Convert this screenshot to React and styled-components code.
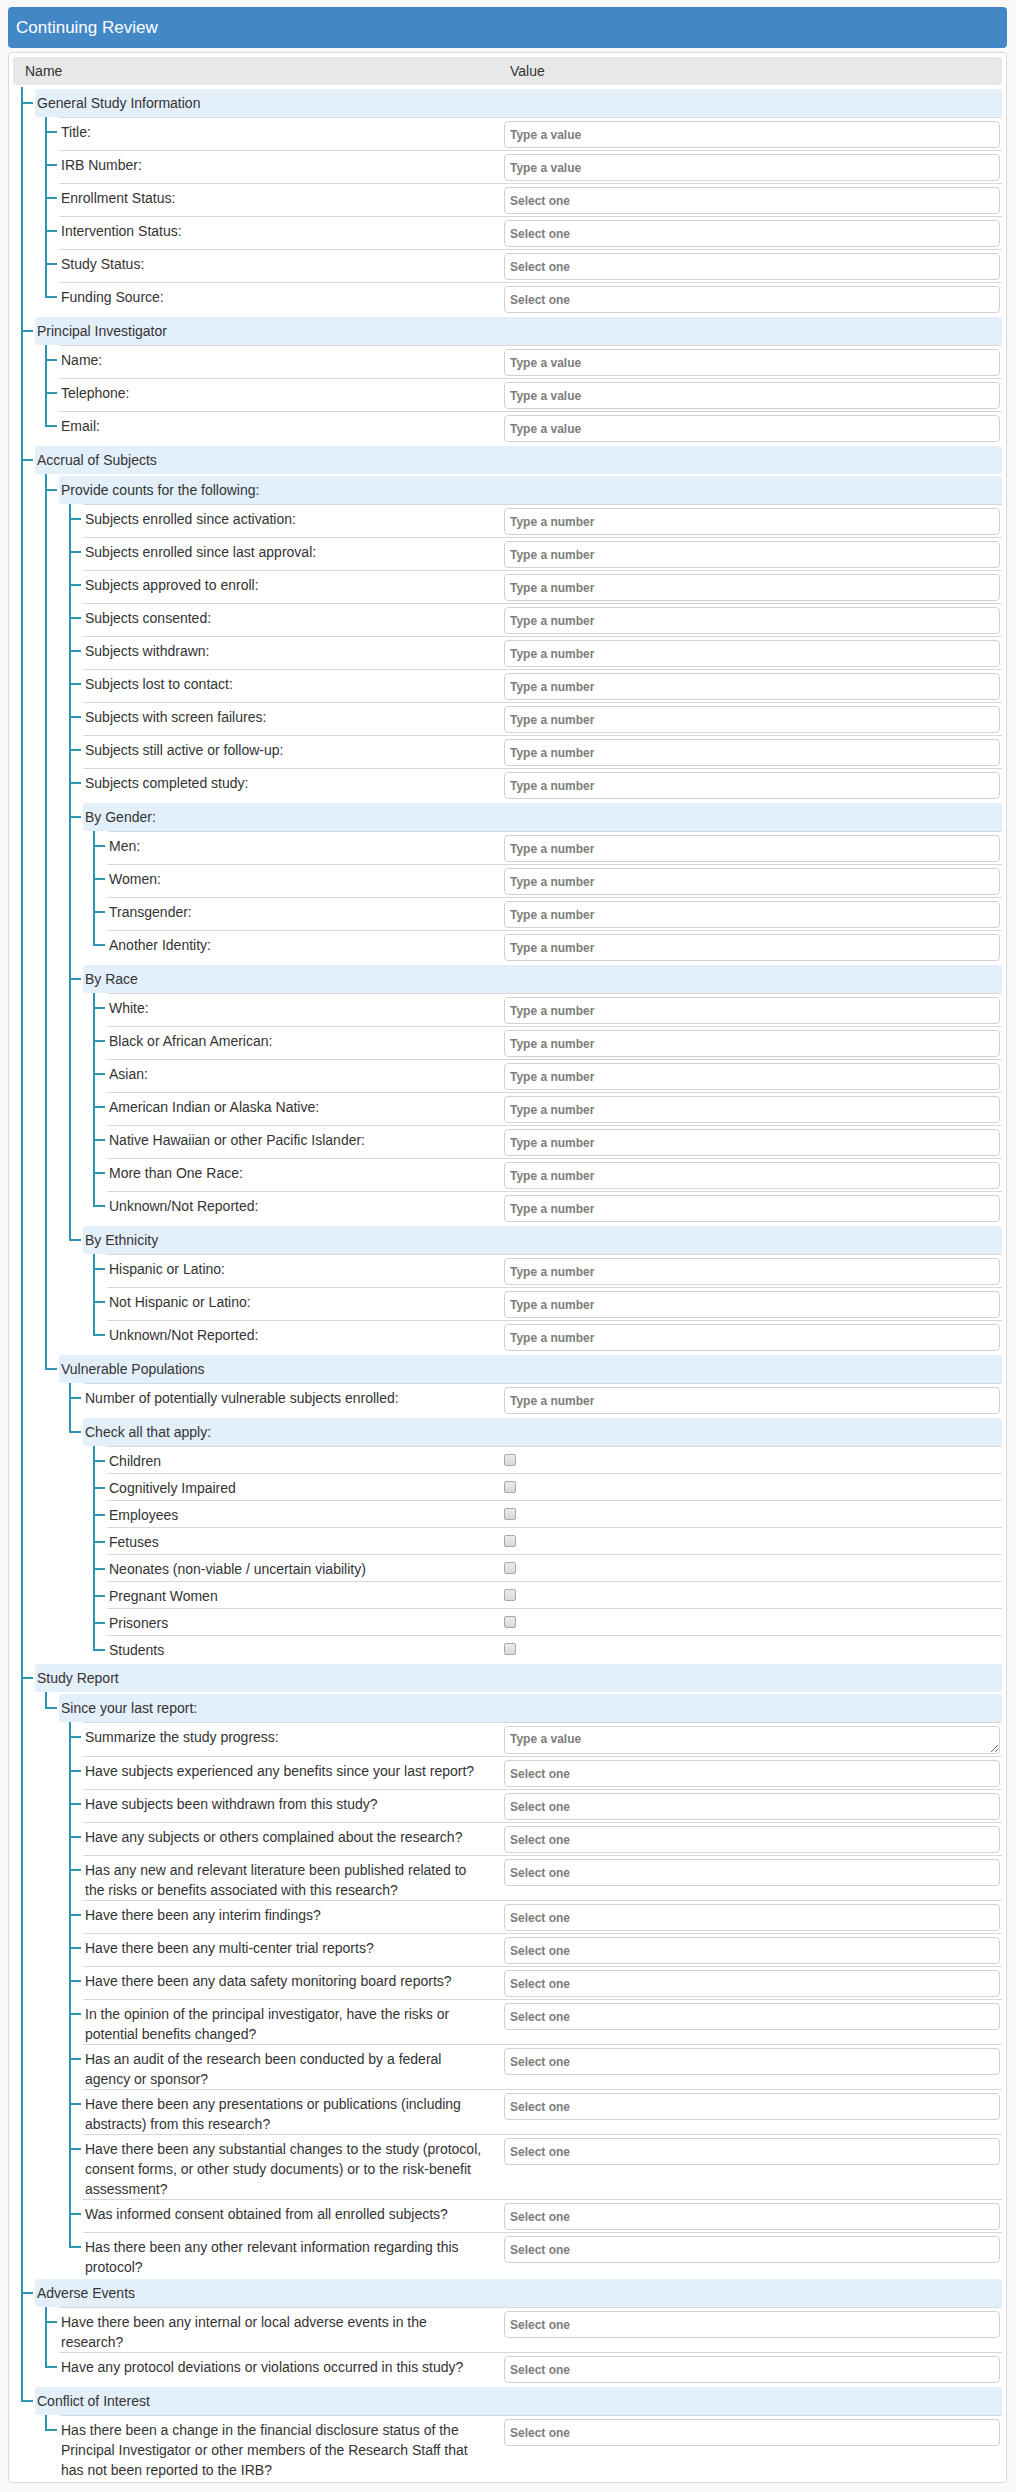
import React from "react"
import styled, { createGlobalStyle, css } from "styled-components"

const LINE = "#2b95b3"

const GlobalStyle = createGlobalStyle`
    html, body {
        margin: 0;
        padding: 0;
        background: #f8f8f8;
    }
    body {
        font-family: "Liberation Sans", Arial, sans-serif;
        font-size: 14px;
        color: #333;
    }
    * {
        box-sizing: border-box;
    }
`

const Page = styled.div`
    padding: 7px 9px 0 8px;
`

const Heading = styled.div`
    height: 41px;
    display: flex;
    align-items: center;
    padding: 0 8px;
    background: #4388c6;
    color: #fff;
    font-size: 17px;
    border-radius: 4px;
`

const Panel = styled.div`
    margin-top: 4px;
    background: #fff;
    border: 1px solid #dadada;
    border-radius: 4px;
    padding: 4px 4px 2px;
`

const HeadRow = styled.div`
    display: flex;
    align-items: center;
    height: 28px;
    margin-bottom: 2px;
    background: #e8e8e8;
    border-radius: 3px;
`

const HeadName = styled.div`
    flex: 1;
    padding-left: 12px;
`

const HeadValue = styled.div`
    width: 498px;
    flex: none;
    padding-left: 6px;
`

const TreeList = styled.ul`
    list-style: none;
    margin: 0;
    padding: 0 0 0 ${p => (p.$root ? 22 : 24)}px;
`

// vertical guide + horizontal stub for every node
const Node = styled.li`
    position: relative;
    padding-top: ${p => (p.$group ? 2 : 0)}px;

    &::before {
        content: "";
        position: absolute;
        left: -14px;
        top: 0;
        width: 2px;
        background: ${LINE};
        ${p =>
            p.$last
                ? css`height: ${p.$group ? 17 : 16}px;`
                : css`bottom: 0;`}
    }
    &::after {
        content: "";
        position: absolute;
        left: -14px;
        top: ${p => (p.$group ? 15 : 14)}px;
        width: 12px;
        height: 2px;
        background: ${LINE};
    }
`

const GroupRow = styled.div`
    height: 28px;
    line-height: 28px;
    padding-left: 2px;
    background: #e3effb;
    border-radius: 3px;
`

const ItemRow = styled.div`
    display: flex;
    align-items: flex-start;
    border-top: 1px solid #d5d9de;
`

const Label = styled.div`
    flex: 1;
    min-width: 0;
    padding: 4px 18px 0 2px;
    line-height: 20px;
`

const ValueCell = styled.div`
    width: 498px;
    flex: none;
    padding: ${p => (p.$check ? "7px 0 7px" : "3px 2px 2px 0")};
`

const fieldStyle = css`
    display: block;
    width: 100%;
    border: 1px solid #cfd2d5;
    border-radius: 4px;
    background: #fff;
    padding: 0 5px;
    font-family: "Liberation Sans", Arial, sans-serif;
    font-size: 12px;
    font-weight: bold;
    color: #555;
    outline: none;
    &::placeholder {
        color: #7d7d7d;
        opacity: 1;
    }
`

const Field = styled.input`
    ${fieldStyle};
    height: 27px;
`

const Area = styled.textarea`
    ${fieldStyle};
    height: 28px;
    padding-top: 5px;
    resize: vertical;
`

const Check = styled.span`
    display: block;
    width: 12px;
    height: 12px;
    border: 1px solid #a8a8a8;
    border-radius: 2px;
    background: linear-gradient(#ececec, #d9d9d9);
`

const t = label => ({ label, kind: "text" })
const s = label => ({ label, kind: "select" })
const n = label => ({ label, kind: "number" })
const c = label => ({ label, kind: "check" })

const tree = [
    {
        label: "General Study Information",
        children: [t("Title:"), t("IRB Number:"), s("Enrollment Status:"), s("Intervention Status:"), s("Study Status:"), s("Funding Source:")],
    },
    {
        label: "Principal Investigator",
        children: [t("Name:"), t("Telephone:"), t("Email:")],
    },
    {
        label: "Accrual of Subjects",
        children: [
            {
                label: "Provide counts for the following:",
                children: [
                    n("Subjects enrolled since activation:"),
                    n("Subjects enrolled since last approval:"),
                    n("Subjects approved to enroll:"),
                    n("Subjects consented:"),
                    n("Subjects withdrawn:"),
                    n("Subjects lost to contact:"),
                    n("Subjects with screen failures:"),
                    n("Subjects still active or follow-up:"),
                    n("Subjects completed study:"),
                    {
                        label: "By Gender:",
                        children: [n("Men:"), n("Women:"), n("Transgender:"), n("Another Identity:")],
                    },
                    {
                        label: "By Race",
                        children: [
                            n("White:"),
                            n("Black or African American:"),
                            n("Asian:"),
                            n("American Indian or Alaska Native:"),
                            n("Native Hawaiian or other Pacific Islander:"),
                            n("More than One Race:"),
                            n("Unknown/Not Reported:"),
                        ],
                    },
                    {
                        label: "By Ethnicity",
                        children: [n("Hispanic or Latino:"), n("Not Hispanic or Latino:"), n("Unknown/Not Reported:")],
                    },
                ],
            },
            {
                label: "Vulnerable Populations",
                children: [
                    n("Number of potentially vulnerable subjects enrolled:"),
                    {
                        label: "Check all that apply:",
                        children: [
                            c("Children"),
                            c("Cognitively Impaired"),
                            c("Employees"),
                            c("Fetuses"),
                            c("Neonates (non-viable / uncertain viability)"),
                            c("Pregnant Women"),
                            c("Prisoners"),
                            c("Students"),
                        ],
                    },
                ],
            },
        ],
    },
    {
        label: "Study Report",
        children: [
            {
                label: "Since your last report:",
                children: [
                    { label: "Summarize the study progress:", kind: "area" },
                    s("Have subjects experienced any benefits since your last report?"),
                    s("Have subjects been withdrawn from this study?"),
                    s("Have any subjects or others complained about the research?"),
                    s("Has any new and relevant literature been published related to the risks or benefits associated with this research?"),
                    s("Have there been any interim findings?"),
                    s("Have there been any multi-center trial reports?"),
                    s("Have there been any data safety monitoring board reports?"),
                    s("In the opinion of the principal investigator, have the risks or potential benefits changed?"),
                    s("Has an audit of the research been conducted by a federal agency or sponsor?"),
                    s("Have there been any presentations or publications (including abstracts) from this research?"),
                    s("Have there been any substantial changes to the study (protocol, consent forms, or other study documents) or to the risk-benefit assessment?"),
                    s("Was informed consent obtained from all enrolled subjects?"),
                    s("Has there been any other relevant information regarding this protocol?"),
                ],
            },
        ],
    },
    {
        label: "Adverse Events",
        children: [
            s("Have there been any internal or local adverse events in the research?"),
            s("Have any protocol deviations or violations occurred in this study?"),
        ],
    },
    {
        label: "Conflict of Interest",
        children: [
            s("Has there been a change in the financial disclosure status of the Principal Investigator or other members of the Research Staff that has not been reported to the IRB?"),
        ],
    },
]

const placeholders = { text: "Type a value", select: "Select one", number: "Type a number" }

const Value = ({ kind }) => {
    if (kind === "check") return <ValueCell $check><Check /></ValueCell>
    if (kind === "area") return <ValueCell><Area placeholder="Type a value" /></ValueCell>
    return (
        <ValueCell>
            <Field placeholder={placeholders[kind]} readOnly={kind === "select"} />
        </ValueCell>
    )
}

const Branch = ({ items, root }) => (
    <TreeList $root={root}>
        {items.map((item, i) => {
            const last = i === items.length - 1
            if (item.children) {
                return (
                    <Node key={item.label} $group $last={last}>
                        <GroupRow>{item.label}</GroupRow>
                        <Branch items={item.children} />
                    </Node>
                )
            }
            return (
                <Node key={item.label + i} $last={last}>
                    <ItemRow>
                        <Label>{item.label}</Label>
                        <Value kind={item.kind} />
                    </ItemRow>
                </Node>
            )
        })}
    </TreeList>
)

const App = () => (
    <Page>
        <GlobalStyle />
        <Heading>Continuing Review</Heading>
        <Panel>
            <HeadRow>
                <HeadName>Name</HeadName>
                <HeadValue>Value</HeadValue>
            </HeadRow>
            <Branch items={tree} root />
        </Panel>
    </Page>
)

export default App
